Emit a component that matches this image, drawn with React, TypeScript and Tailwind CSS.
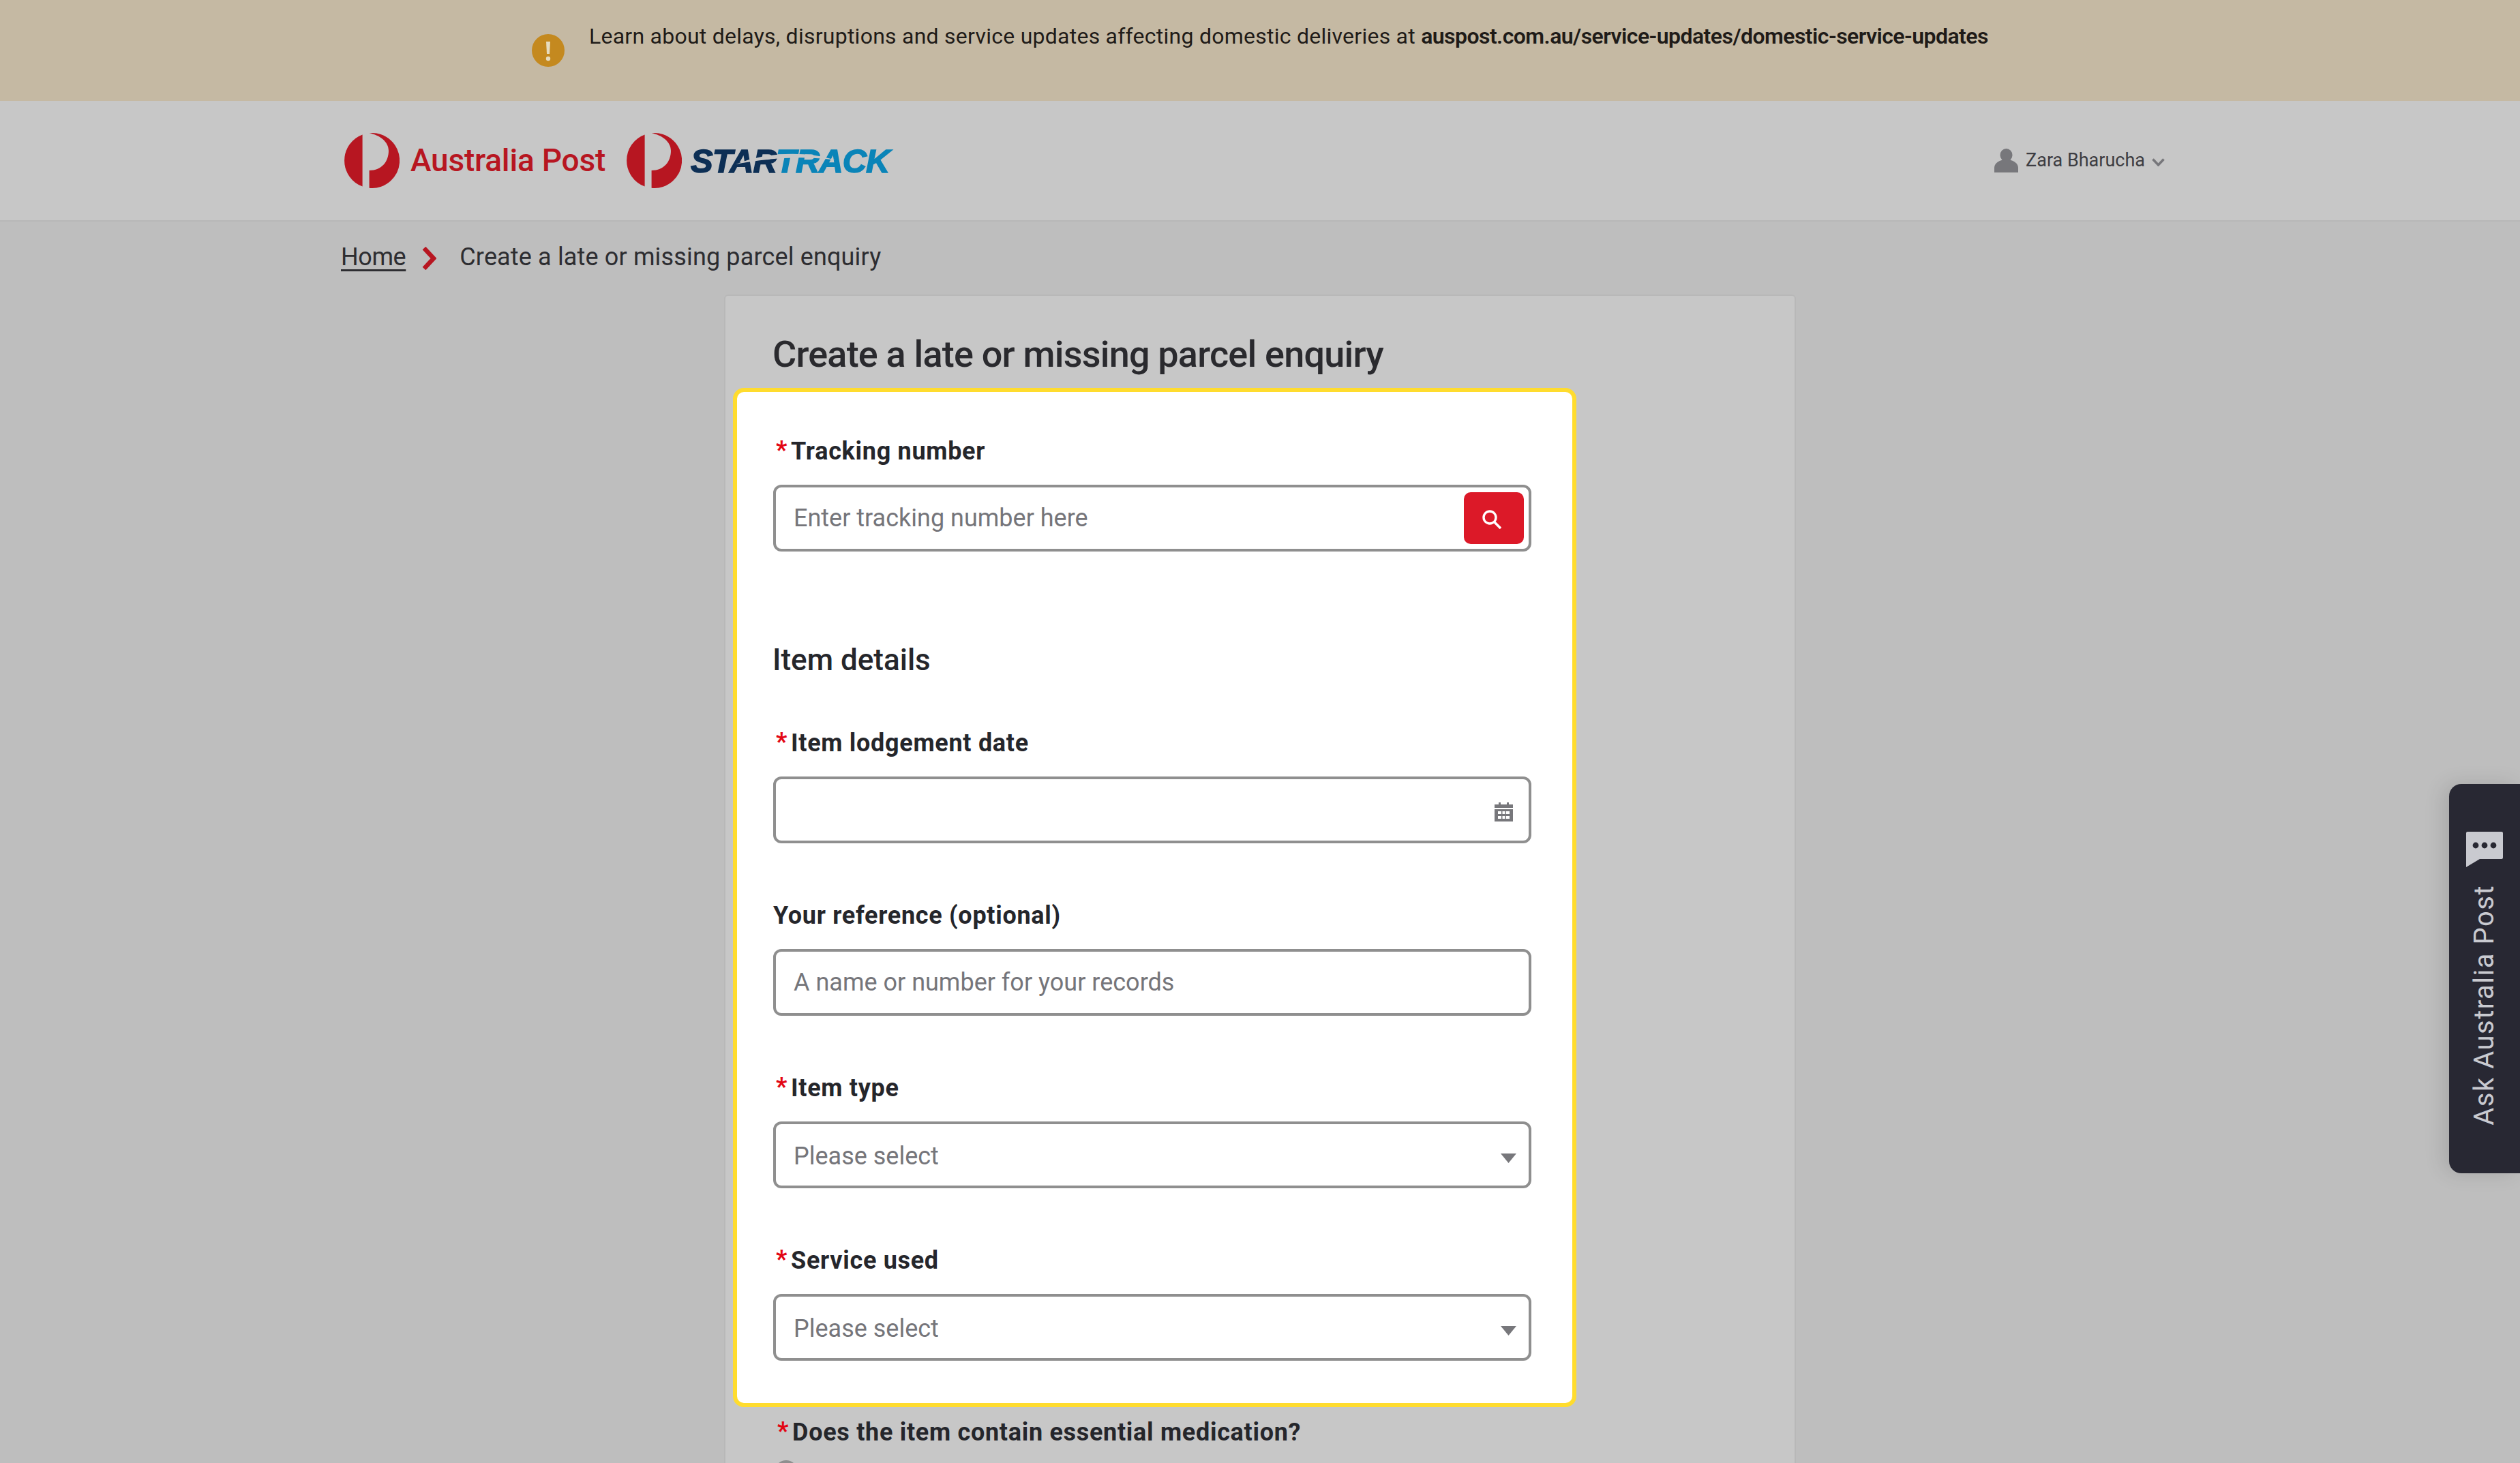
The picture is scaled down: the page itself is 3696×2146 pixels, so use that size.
function PostMark() {
  return (
    <svg viewBox="0 0 81 81" className="h-[81px] w-[81px] shrink-0">
      <path d="M26.6 2.5A40.5 40.5 0 0 0 26.6 78.5Z" fill="#b71621" />
      <path
        d="M36.6 0.2A40.5 40.5 0 1 1 36.6 80.8V55C55 55 65 42 65 26C65 13 52 3 36.6 0.2Z"
        fill="#b71621"
      />
    </svg>
  );
}

function StarTrackLogo() {
  return (
    <div className="relative ml-[13px] h-[50px] w-[296px] font-['Liberation_Sans',sans-serif] text-[49px] leading-[50px] font-bold tracking-[-1px] whitespace-nowrap italic">
      <span className="text-[#0d2f55] [-webkit-text-stroke:1.5px_#0d2f55]">STAR</span>
      <span className="text-[#0a84b8] [-webkit-text-stroke:1.5px_#0a84b8]">TRACK</span>
      <svg viewBox="0 0 296 50" className="absolute top-0 left-0 h-[50px] w-[296px]">
        <path d="M66 30C110 12 170 10 212 24C170 17 115 20 66 30Z" fill="#c7c7c7" />
      </svg>
    </div>
  );
}

function Label({ text, required = true }: { text: string; required?: boolean }) {
  return (
    <label className="flex h-[40px] items-center pt-[2px] text-[36px] font-bold tracking-[0.7px] text-[#25262b]">
      {required && <span className="mt-[-4px] mr-[5px] ml-[4px] text-[#e30613]">*</span>}
      {text}
    </label>
  );
}

function Arrow() {
  return (
    <svg viewBox="0 0 23 14" className="pointer-events-none absolute top-[47px] right-[22px] h-[14px] w-[23px]">
      <path d="M0 0H23L11.5 14Z" fill="#77777b" />
    </svg>
  );
}

const inputClass =
  "h-[98px] w-full rounded-[12px] border-4 border-[#8f8f8f] bg-white pl-[26px] text-[36px] text-[#75757a] outline-none placeholder:text-[#75757a]";

function SelectField({ label }: { label: string }) {
  return (
    <div className="mt-[85px]">
      <Label text={label} />
      <div className="relative mt-[30px]">
        <select className={`${inputClass} appearance-none pt-[3px]`}>
          <option>Please select</option>
        </select>
        <Arrow />
      </div>
    </div>
  );
}

export default function App() {
  return (
    <div className="relative h-[2146px] w-full overflow-hidden bg-[#bebebe] font-['Roboto',sans-serif] text-[#25262b]">
      <div className="flex h-[148px] bg-[#c5b9a3] pt-[50px] pl-[780px]">
        <svg viewBox="0 0 48 48" className="h-[48px] w-[48px] shrink-0">
          <circle cx="24" cy="24" r="24" fill="#c4891f" />
          <path d="M21 11H27L26 29H22Z" fill="#e6dcc0" />
          <circle cx="24" cy="36" r="3.2" fill="#e6dcc0" />
        </svg>
        <p className="mt-[-20px] ml-[36px] text-[32px] leading-[46px] tracking-[0.25px] whitespace-nowrap text-[#1f1b18]">
          Learn about delays, disruptions and service updates affecting domestic deliveries at{" "}
          <span className="font-semibold tracking-[-0.55px]">auspost.com.au/service-updates/domestic-service-updates</span>
        </p>
      </div>

      <header className="flex h-[177px] items-center justify-between border-b-2 border-[#b8b8b8] bg-[#c7c7c7] pr-[521px] pl-[505px]">
        <div className="flex items-center">
          <PostMark />
          <span className="mr-[31px] ml-[16px] text-[46px] font-medium tracking-[-0.2px] whitespace-nowrap text-[#b71621]">
            Australia Post
          </span>
          <PostMark />
          <StarTrackLogo />
        </div>
        <div className="flex items-center text-[#3d3d42]">
          <svg viewBox="0 0 35 35" className="h-[35px] w-[35px]">
            <ellipse cx="17.5" cy="9.5" rx="9" ry="9.5" fill="#77777b" />
            <path d="M0 35V28C0 21 8 16 17.5 16C27 16 35 21 35 28V35Z" fill="#77777b" />
          </svg>
          <span className="ml-[11px] text-[27px]">Zara Bharucha</span>
          <svg viewBox="0 0 19 12" fill="none" className="mt-[4px] ml-[10px] h-[12px] w-[19px]">
            <path d="M1.5 1.5L9.5 10L17.5 1.5" stroke="#77777b" strokeWidth="3.5" />
          </svg>
        </div>
      </header>

      <nav className="flex h-[104px] items-center pl-[500px] text-[36px] text-[#2d2d31]">
        <a className="tracking-[-0.4px] underline underline-offset-[6px]">Home</a>
        <svg viewBox="0 0 21 34" fill="none" className="mt-[4px] ml-[24px] h-[34px] w-[21px]">
          <path d="M3 2L17 17L3 32" stroke="#b71621" strokeWidth="6.5" />
        </svg>
        <span className="ml-[34px] tracking-[0.15px]">Create a late or missing parcel enquiry</span>
      </nav>

      <main className="mx-auto mt-[3px] h-[1800px] w-[1572px] rounded-t-[6px] border-2 border-b-0 border-[#b8b8b8] bg-[#c7c7c7] pl-[11px]">
        <h1 className="mt-[51px] mb-[14px] ml-[58px] h-[70px] text-[54px] leading-[70px] font-medium tracking-[-0.8px] text-[#2a2a2e]">
          Create a late or missing parcel enquiry
        </h1>

        <section className="w-[1237px] rounded-[16px] border-[6px] border-[#ffdc2e] bg-white pt-[66px] pr-[60px] pb-[62px] pl-[53px]">
          <Label text="Tracking number" />
          <div className="relative mt-[30px]">
            <input className={inputClass} placeholder="Enter tracking number here" />
            <button className="absolute top-[11px] right-[11px] flex h-[76px] w-[88px] items-center justify-center rounded-[10px] bg-[#dc1928]">
              <svg viewBox="0 0 28 28" fill="none" className="mt-[3px] mr-[6px] h-[28px] w-[28px]">
                <circle cx="11" cy="11" r="9" stroke="white" strokeWidth="3.4" />
                <path d="M17.5 17.5L27 27" stroke="white" strokeWidth="3.6" />
              </svg>
            </button>
          </div>

          <h2 className="mt-[133px] mb-[75px] ml-[-1px] h-[52px] text-[44px] leading-[52px] font-medium text-[#25262b]">
            Item details
          </h2>

          <Label text="Item lodgement date" />
          <div className="relative mt-[30px]">
            <input className={inputClass} />
            <svg viewBox="0 0 27 28" className="absolute top-[38px] right-[27px] h-[28px] w-[27px]">
              <path
                fillRule="evenodd"
                fill="#77777b"
                d="M6 0H9V3H18V0H21V3H27V8H0V3H6ZM0 10H27V28H0ZM5 13V17H10V13ZM11.5 13V17H15.5V13ZM17 13V17H22V13ZM5 20V24H10V20ZM11.5 20V24H15.5V20ZM17 20V24H22V20Z"
              />
            </svg>
          </div>

          <div className="mt-[85px]">
            <Label text="Your reference (optional)" required={false} />
            <input className={`${inputClass} mt-[30px]`} placeholder="A name or number for your records" />
          </div>

          <SelectField label="Item type" />
          <SelectField label="Service used" />
        </section>

        <div className="mt-[16px] ml-[61px]">
          <Label text="Does the item contain essential medication?" />
          <div className="mt-[22px] h-[34px] w-[34px] rounded-full border-4 border-[#8f8f8f]" />
        </div>
      </main>

      <aside className="absolute top-[1150px] right-0 flex h-[571px] w-[104px] flex-col items-center rounded-l-[18px] bg-[#282833] pt-[70px] text-[#c9cad0] shadow-[-8px_0_30px_rgba(0,0,0,0.12)]">
        <svg viewBox="0 0 54 52" className="h-[52px] w-[54px] shrink-0">
          <path d="M2 0H52A2 2 0 0 1 54 2V38A2 2 0 0 1 52 40H20L0 52V2A2 2 0 0 1 2 0Z" fill="#c9cad0" />
          <circle cx="14" cy="20" r="4.4" fill="#282833" />
          <circle cx="27" cy="20" r="4.4" fill="#282833" />
          <circle cx="40" cy="20" r="4.4" fill="#282833" />
        </svg>
        <span className="mt-[26px] rotate-180 text-[40px] leading-[44px] tracking-[1.5px] whitespace-nowrap [writing-mode:vertical-rl]">
          Ask Australia Post
        </span>
      </aside>
    </div>
  );
}
